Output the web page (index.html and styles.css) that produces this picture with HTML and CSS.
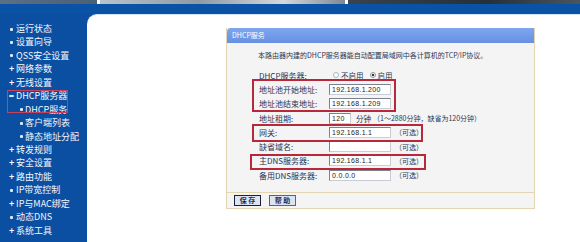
FILE: index.html
```html
<!doctype html>
<html lang="zh-CN">
<head>
    <meta charset="UTF-8">
    <title>DHCP服务</title>
    <link rel="stylesheet" href="styles.css">
</head>
<body>
<div class="topbar">
    <span class="tb1"></span><span class="tb2"></span><span class="tb3"></span>
</div>
<div class="band"></div>
<div class="main">
    <div class="side">
        <ul class="menu">
            <li class="dot">运行状态</li>
            <li class="dot">设置向导</li>
            <li class="dot">QSS安全设置</li>
            <li class="plus">网络参数</li>
            <li class="plus">无线设置</li>
            <li class="minus">DHCP服务器</li>
            <li class="dot sub">DHCP服务</li>
            <li class="dot sub">客户端列表</li>
            <li class="dot sub">静态地址分配</li>
            <li class="plus">转发规则</li>
            <li class="plus">安全设置</li>
            <li class="plus">路由功能</li>
            <li class="dot">IP带宽控制</li>
            <li class="plus">IP与MAC绑定</li>
            <li class="dot">动态DNS</li>
            <li class="plus">系统工具</li>
        </ul>
        <span class="mark side-mark"></span>
    </div>
    <div class="content">
        <div class="panel">
            <div class="panel-head">DHCP服务</div>
            <div class="panel-body">
                <p class="intro">本路由器内建的DHCP服务器能自动配置局域网中各计算机的TCP/IP协议。</p>
                <div class="form">
                    <div class="row">
                        <span class="lbl">DHCP服务器:</span>
                        <span class="radio"></span><span class="opt">不启用</span>
                        <span class="radio on"></span><span class="opt">启用</span>
                    </div>
                    <div class="row">
                        <span class="lbl">地址池开始地址:</span>
                        <span class="inp">192.168.1.200</span>
                    </div>
                    <div class="row">
                        <span class="lbl">地址池结束地址:</span>
                        <span class="inp">192.168.1.209</span>
                    </div>
                    <div class="row">
                        <span class="lbl">地址租期:</span>
                        <span class="inp short">120</span>
                        <span class="unit">分钟</span>
                        <span class="note">（1～2880分钟，缺省为120分钟）</span>
                    </div>
                    <div class="row">
                        <span class="lbl">网关:</span>
                        <span class="inp">192.168.1.1</span>
                        <span class="note">（可选）</span>
                    </div>
                    <div class="row">
                        <span class="lbl">缺省域名:</span>
                        <span class="inp"></span>
                        <span class="note">（可选）</span>
                    </div>
                    <div class="row">
                        <span class="lbl">主DNS服务器:</span>
                        <span class="inp">192.168.1.1</span>
                        <span class="note">（可选）</span>
                    </div>
                    <div class="row">
                        <span class="lbl">备用DNS服务器:</span>
                        <span class="inp">0.0.0.0</span>
                        <span class="note">（可选）</span>
                    </div>
                </div>
                <div class="foot">
                    <span class="btn focus">保 存</span>
                    <span class="btn">帮 助</span>
                </div>
                <span class="mark m1"></span>
                <span class="mark m2"></span>
                <span class="mark m3"></span>
            </div>
        </div>
    </div>
</div>
</body>
</html>
```

FILE: styles.css
```css
* {
    margin: 0;
    padding: 0;
    box-sizing: border-box;
}

body {
    width: 580px;
    height: 242px;
    overflow: hidden;
    background: #fff;
    font-family: "Noto Sans CJK SC", "Liberation Sans", sans-serif;
}

.topbar {
    display: flex;
    height: 4px;
    background: #fff;
}

.topbar .tb1 {
    width: 97px;
    background: linear-gradient(to right, #5b7085, #4a6076);
}

.topbar .tb2 {
    width: 245px;
    margin-left: 3px;
    background: linear-gradient(to right, #b9c3cc, #8f9aa5 40%, #d3d8dc 75%, #7e8893);
}

.topbar .tb3 {
    flex: 1;
    margin-left: 3px;
    background: linear-gradient(to right, #3a434d, #26303a 60%, #4a5560);
}

.band {
    height: 10px;
    background: #0952a6;
}

.main {
    display: flex;
    height: 228px;
    background: #0a4fa2;
}

/* 左侧菜单 */
.side {
    width: 87px;
    position: relative;
}

.menu {
    list-style: none;
    padding-top: 8px;
}

.menu li {
    position: relative;
    height: 13.45px;
    line-height: 13.45px;
    padding-left: 16px;
    color: #f4f7fc;
    font-size: 9px;
    white-space: nowrap;
}

.menu li.sub {
    padding-left: 25px;
}

.menu li::before {
    content: "";
    position: absolute;
    top: 5.5px;
    left: 10px;
    width: 3px;
    height: 3px;
    background: #dfe9f7;
    border-radius: 1px;
}

.menu li.sub::before {
    left: 20px;
}

.menu li.plus::before {
    content: "+";
    top: 0;
    left: 9px;
    width: auto;
    height: auto;
    background: none;
    font-size: 9px;
    font-weight: bold;
    line-height: 13px;
}

.menu li.minus::before {
    top: 6px;
    left: 9px;
    width: 5px;
    height: 2px;
}

.mark {
    position: absolute;
    border: 2px solid #b8283a;
}

.side-mark {
    top: 76px;
    left: 7px;
    width: 61px;
    height: 23px;
    border-width: 1.5px;
    border-color: #c9405a;
}

/* 右侧内容 */
.content {
    flex: 1;
    background: #fff;
    border-top-left-radius: 10px;
    border-top: 1px solid #d4e4f6;
    padding: 13px 0 0 139px;
}

.panel {
    width: 309px;
    height: 181px;
    border: 1px solid #e4d5b2;
    border-top: none;
    background: #f4f4f4;
    display: flex;
    flex-direction: column;
}

.panel-head {
    height: 15px;
    line-height: 15px;
    padding-left: 5px;
    background: linear-gradient(#7ea6ef, #6690e2);
    border-top-left-radius: 4px;
    color: #fff;
    font-size: 7px;
}

.panel-body {
    flex: 1;
    position: relative;
    display: flex;
    flex-direction: column;
}

.intro {
    margin: 7px 0 0 31px;
    height: 10px;
    line-height: 10px;
    font-size: 7px;
    color: #2c3450;
    white-space: nowrap;
}

.form {
    margin-top: 8px;
    padding-left: 32px;
}

.row {
    display: flex;
    align-items: center;
    height: 14.3px;
    font-size: 8px;
    color: #2a3456;
    white-space: nowrap;
}

.lbl {
    width: 70px;
}

.radio {
    width: 6px;
    height: 6px;
    margin: 0 2px 0 4px;
    border: 1px solid #aab4c0;
    border-radius: 50%;
    background: #fff;
}

.radio.on {
    margin-left: 6px;
    background: radial-gradient(#333 0 1.3px, #fff 1.6px);
    border-color: #8c96a4;
}

.opt {
    font-size: 7.5px;
}

.inp {
    width: 62px;
    height: 11px;
    line-height: 9px;
    padding-left: 2px;
    background: #fff;
    border: 1px solid #7a8290;
    border-right-color: #c8ccd4;
    border-bottom-color: #c8ccd4;
    font-family: "Liberation Sans", sans-serif;
    font-size: 7px;
    letter-spacing: 0.3px;
    color: #222;
}

.inp.short {
    width: 22px;
}

.unit {
    margin-left: 5px;
    font-size: 7.5px;
}

.note {
    margin-left: 4px;
    font-size: 7px;
}

.unit + .note {
    margin-left: 2px;
}

.foot {
    margin-top: auto;
    height: 16px;
    border-top: 1px solid #e4d5b2;
    display: flex;
    align-items: center;
    gap: 8px;
    padding-left: 7px;
}

.btn {
    width: 27px;
    height: 11px;
    line-height: 9px;
    text-align: center;
    font-size: 7px;
    font-weight: bold;
    color: #1e2c5a;
    background: #dce4f2;
    border: 1px solid #56648a;
}

.btn.focus {
    border: 1.5px solid #1a2236;
}

.m1 {
    top: 36px;
    left: 25px;
    width: 144px;
    height: 33px;
}

.m2 {
    top: 81px;
    left: 25px;
    width: 171px;
    height: 18px;
}

.m3 {
    top: 111px;
    left: 23px;
    width: 176px;
    height: 16px;
}
```
